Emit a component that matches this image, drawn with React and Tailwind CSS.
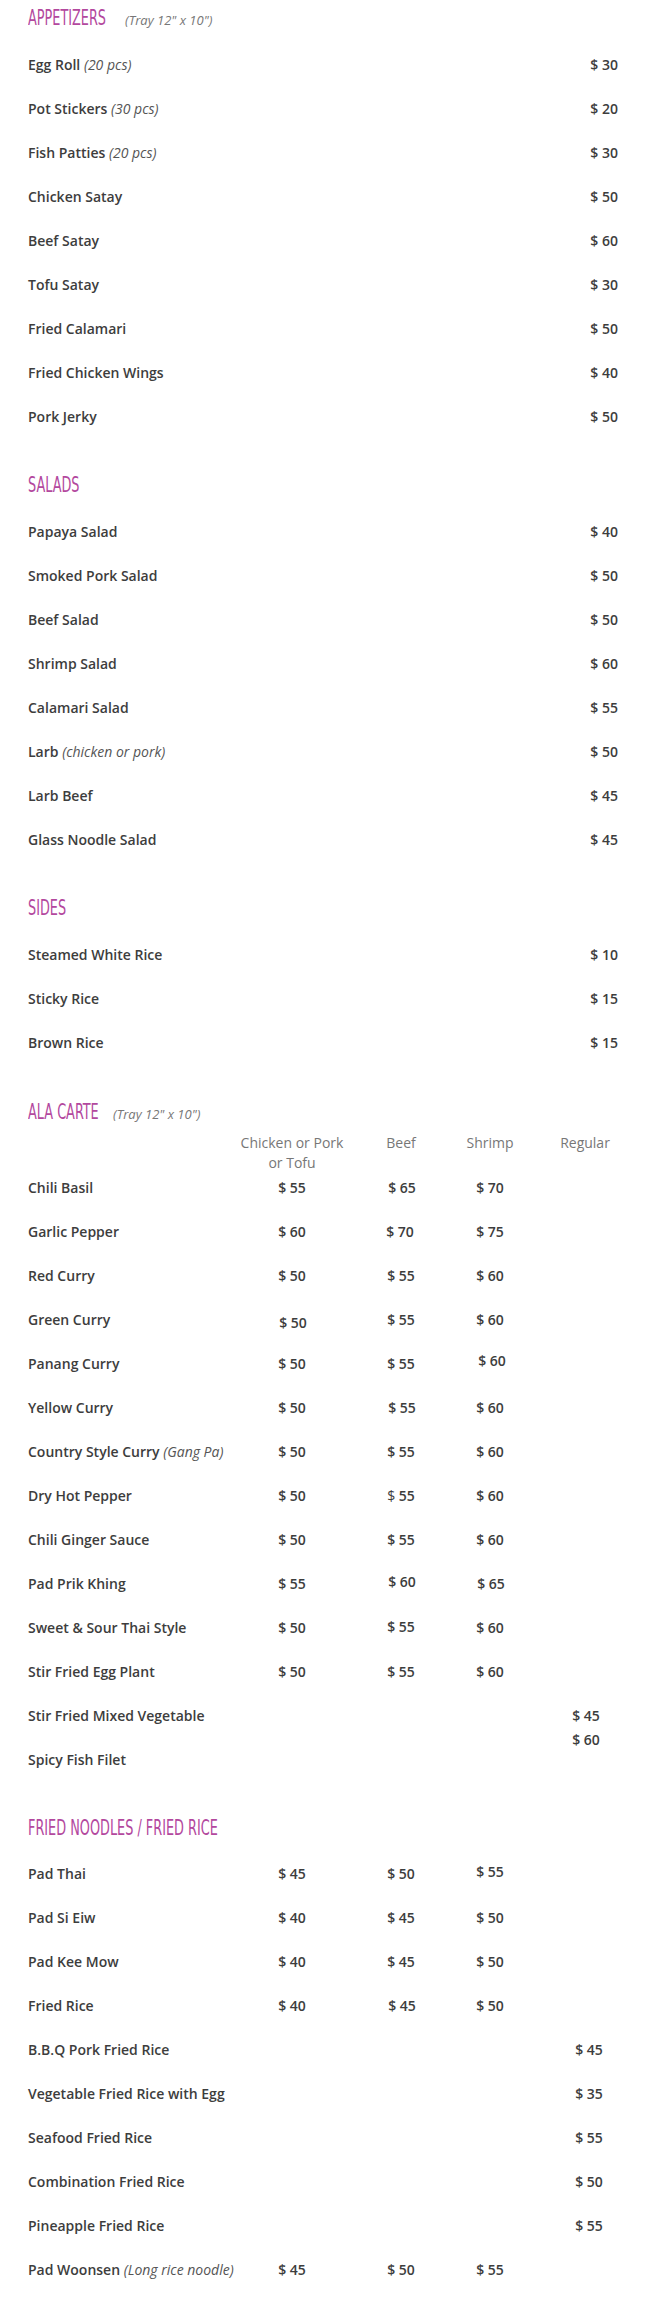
import React from "react";

const BODY = { fontFamily: '"Open Sans", "Liberation Sans", sans-serif' };

const appetizers = [
  ["Egg Roll", "(20 pcs)", "$ 30"],
  ["Pot Stickers", "(30 pcs)", "$ 20"],
  ["Fish Patties", "(20 pcs)", "$ 30"],
  ["Chicken Satay", null, "$ 50"],
  ["Beef Satay", null, "$ 60"],
  ["Tofu Satay", null, "$ 30"],
  ["Fried Calamari", null, "$ 50"],
  ["Fried Chicken Wings", null, "$ 40"],
  ["Pork Jerky", null, "$ 50"],
];

const salads = [
  ["Papaya Salad", null, "$ 40"],
  ["Smoked Pork Salad", null, "$ 50"],
  ["Beef Salad", null, "$ 50"],
  ["Shrimp Salad", null, "$ 60"],
  ["Calamari Salad", null, "$ 55"],
  ["Larb", "(chicken or pork)", "$ 50"],
  ["Larb Beef", null, "$ 45"],
  ["Glass Noodle Salad", null, "$ 45"],
];

const sides = [
  ["Steamed White Rice", null, "$ 10"],
  ["Sticky Rice", null, "$ 15"],
  ["Brown Rice", null, "$ 15"],
];

function Heading({ title, note, boxW }) {
  return (
    <div className="flex h-[28px] items-baseline leading-[28px]">
      <div className={`${boxW} shrink-0`}>
        <span
          className="inline-block origin-left scale-x-[0.68] whitespace-nowrap text-[21px] font-normal uppercase text-[#b3489e]"
          style={{ fontFamily: '"Liberation Sans Narrow", "DejaVu Sans Condensed", "Liberation Sans", sans-serif' }}
        >
          {title}
        </span>
      </div>
      {note && <span className="text-[13px] italic text-[#777]">{note}</span>}
    </div>
  );
}

function Note({ children }) {
  return (
    <>
      {" "}
      <span className="text-[14px] font-normal italic text-[#555]">{children}</span>
    </>
  );
}

function SimpleRow({ name, note, price }) {
  return (
    <div className="flex h-[44px] items-start justify-between leading-[20px]">
      <span className="font-semibold text-[#3d3d3d]">
        {name}
        {note && <Note>{note}</Note>}
      </span>
      <span className="font-semibold text-[#3d3d3d]">{price}</span>
    </div>
  );
}

function Section({ title, note, boxW, items }) {
  return (
    <section className="mb-[20px]">
      <div className="mb-[23px]">
        <Heading title={title} note={note} boxW={boxW} />
      </div>
      {items.map((it) => (
        <SimpleRow key={it[0]} name={it[0]} note={it[1]} price={it[2]} />
      ))}
    </section>
  );
}

function GridRow({ name, note, c1, c2, c3, c4, o1 = "", o2 = "", o3 = "", o4 = "" }) {
  return (
    <div className="flex h-[44px] items-start leading-[20px] font-semibold text-[#3d3d3d]">
      <div className="w-[209px] shrink-0 whitespace-nowrap">
        {name}
        {note && <Note>{note}</Note>}
      </div>
      <div className={`w-[110px] shrink-0 text-center ${o1}`}>{c1}</div>
      <div className={`ml-[14px] w-[80px] shrink-0 text-center ${o2}`}>{c2}</div>
      <div className={`ml-[9px] w-[80px] shrink-0 text-center ${o3}`}>{c3}</div>
      <div className={`ml-[20px] w-[70px] shrink-0 text-center ${o4}`}>{c4}</div>
    </div>
  );
}

export default function App() {
  return (
    <div className="w-[646px] bg-white px-[28px] pt-[4px] text-[14px]" style={BODY}>
      <Section title="Appetizers" note={'(Tray 12" x 10")'} boxW="w-[97px]" items={appetizers} />
      <Section title="Salads" items={salads} boxW="w-[97px]" />
      <Section title="Sides" items={sides} boxW="w-[97px]" />

      <section className="mb-[20px] pt-[1px]">
        <Heading title="Ala Carte" note={'(Tray 12" x 10")'} boxW="w-[85px]" />
        <div className="mb-[5px] mt-[7px] flex leading-[20px] font-normal text-[#777]">
          <div className="w-[209px] shrink-0" />
          <div className="w-[110px] shrink-0 text-center">Chicken or Pork or Tofu</div>
          <div className="ml-[14px] w-[80px] shrink-0 text-center">Beef</div>
          <div className="ml-[9px] w-[80px] shrink-0 text-center">Shrimp</div>
          <div className="ml-[20px] w-[70px] shrink-0 text-center">Regular</div>
        </div>
        <GridRow name="Chili Basil" c1="$ 55" c2="$ 65" c3="$ 70" o2="translate-x-[1px]" />
        <GridRow name="Garlic Pepper" c1="$ 60" c2="$ 70" c3="$ 75" o2="-translate-x-[1px]" />
        <GridRow name="Red Curry" c1="$ 50" c2="$ 55" c3="$ 60" />
        <GridRow name="Green Curry" c1="$ 50" c2="$ 55" c3="$ 60" o1="translate-y-[3px] translate-x-[1px]" />
        <GridRow name="Panang Curry" c1="$ 50" c2="$ 55" c3="$ 60" o3="-translate-y-[3px] translate-x-[2px]" />
        <GridRow name="Yellow Curry" c1="$ 50" c2="$ 55" c3="$ 60" o2="translate-x-[1px]" />
        <GridRow name="Country Style Curry" note="(Gang Pa)" c1="$ 50" c2="$ 55" c3="$ 60" />
        <GridRow
          name="Dry Hot Pepper"
          c1="$ 50"
          c2={<><span className="font-normal">$</span> 55</>}
          c3="$ 60"
        />
        <GridRow name="Chili Ginger Sauce" c1="$ 50" c2="$ 55" c3="$ 60" />
        <GridRow name="Pad Prik Khing" c1="$ 55" c2="$ 60" c3="$ 65" o2="-translate-y-[2px] translate-x-[1px]" o3="translate-x-[1px]" />
        <GridRow name="Sweet & Sour Thai Style" c1="$ 50" c2="$ 55" c3="$ 60" o2="-translate-y-[1px]" />
        <GridRow name="Stir Fried Egg Plant" c1="$ 50" c2="$ 55" c3="$ 60" />
        <GridRow
          name="Stir Fried Mixed Vegetable"
          c4={<><div>$ 45</div><div className="mt-[4px]">$ 60</div></>}
          o4="translate-x-[1px]"
        />
        <GridRow name="Spicy Fish Filet" />
      </section>

      <section>
        <div className="mb-[22px]">
          <Heading title="Fried Noodles / Fried Rice" boxW="w-[200px]" />
        </div>
        <GridRow name="Pad Thai" c1="$ 45" c2="$ 50" c3="$ 55" o3="-translate-y-[2px]" />
        <GridRow name="Pad Si Eiw" c1="$ 40" c2="$ 45" c3="$ 50" />
        <GridRow name="Pad Kee Mow" c1="$ 40" c2="$ 45" c3="$ 50" />
        <GridRow name="Fried Rice" c1="$ 40" c2="$ 45" c3="$ 50" o2="translate-x-[1px]" />
        <GridRow name="B.B.Q Pork Fried Rice" c4="$ 45" o4="translate-x-[4px]" />
        <GridRow name="Vegetable Fried Rice with Egg" c4="$ 35" o4="translate-x-[4px]" />
        <GridRow name="Seafood Fried Rice" c4="$ 55" o4="translate-x-[4px]" />
        <GridRow name="Combination Fried Rice" c4="$ 50" o4="translate-x-[4px]" />
        <GridRow name="Pineapple Fried Rice" c4="$ 55" o4="translate-x-[4px]" />
        <GridRow name="Pad Woonsen" note="(Long rice noodle)" c1="$ 45" c2="$ 50" c3="$ 55" />
      </section>
    </div>
  );
}
